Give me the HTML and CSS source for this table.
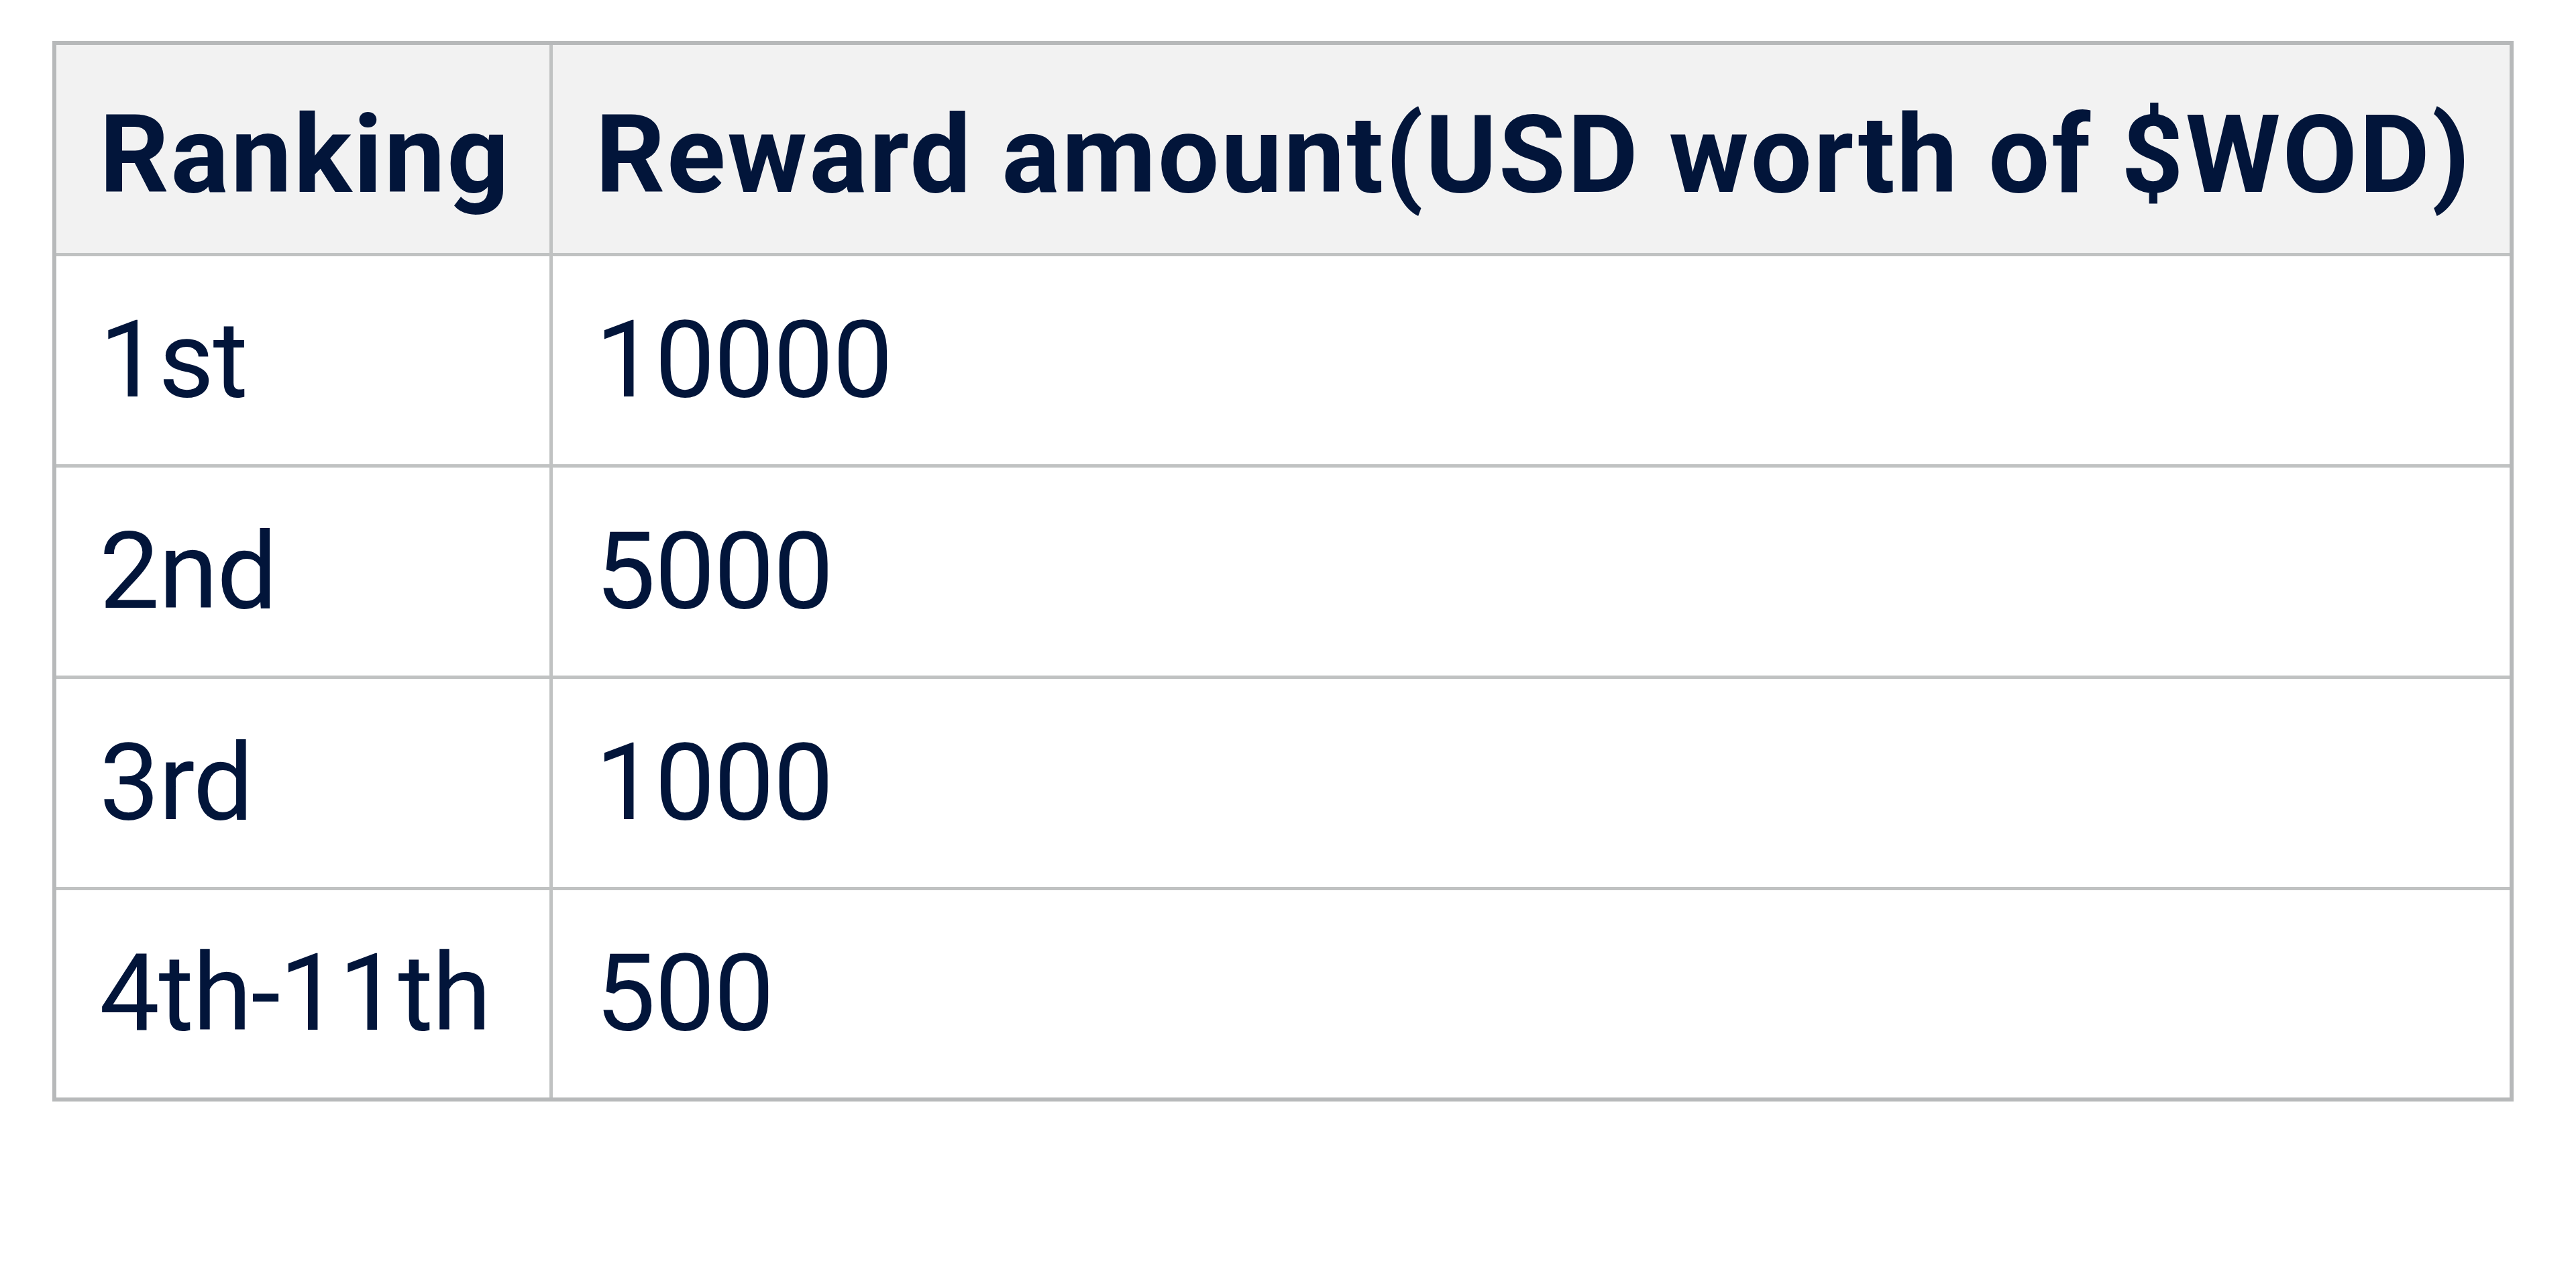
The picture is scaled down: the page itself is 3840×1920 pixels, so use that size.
FILE: index.html
```html
<!DOCTYPE html>
<html>
<head>
<meta charset="utf-8">
<link rel="stylesheet" href="styles.css">
</head>
<body>
<table class="rewards">
  <thead>
    <tr><th class="rank">Ranking</th><th>Reward amount(USD worth of $WOD)</th></tr>
  </thead>
  <tbody>
    <tr><td class="rank">1st</td><td>10000</td></tr>
    <tr><td class="rank">2nd</td><td>5000</td></tr>
    <tr><td class="rank">3rd</td><td>1000</td></tr>
    <tr><td class="rank">4th-11th</td><td>500</td></tr>
  </tbody>
</table>
</body>
</html>
```
FILE: styles.css
```css
html, body {
  margin: 0;
  background: #ffffff;
}
body {
  padding: 61px 93px 0 78px;
  font-family: Roboto, "Noto Sans", sans-serif;
  color: #02153a;
}
.rewards {
  width: 3669px;
  border-collapse: collapse;
  border: 6px solid #b7b9ba;
}
.rewards th,
.rewards td {
  border: 5px solid #c0c2c2;
  height: 315px;
  padding: 0 0 0 64px;
  text-align: left;
  vertical-align: middle;
  font-size: 160px;
  line-height: 1;
  box-sizing: border-box;
}
.rewards th {
  background: #f2f2f2;
  font-weight: 700;
  font-size: 162px;
  letter-spacing: 2.8px;
  padding-top: 18px;
}
.rewards td {
  font-weight: 400;
  letter-spacing: -1.5px;
}
.rewards .rank {
  width: 740px;
}
```
